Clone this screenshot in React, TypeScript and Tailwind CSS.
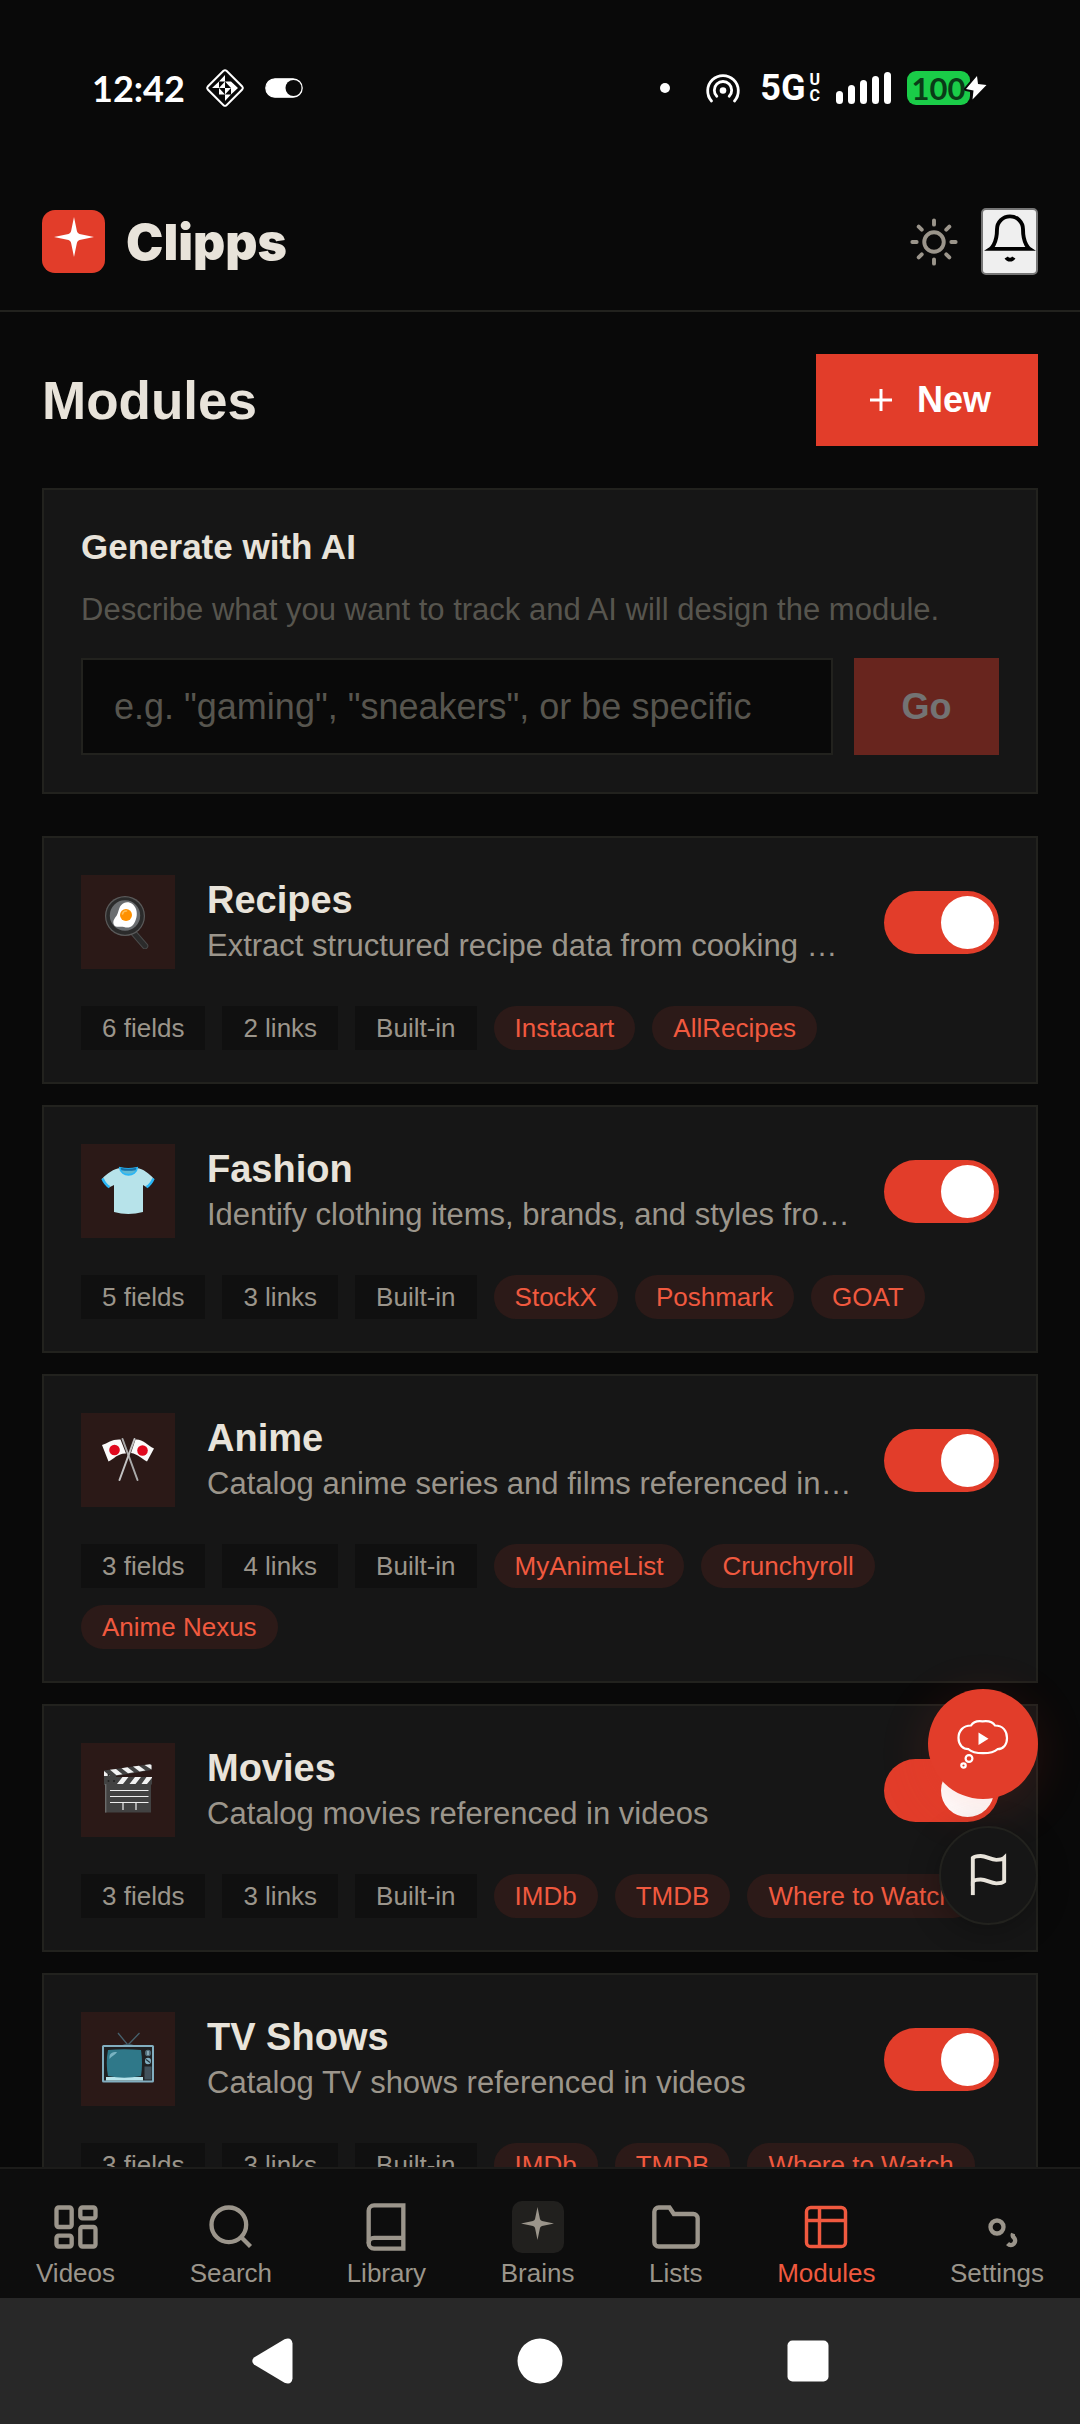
import { useState } from 'react';
import type { ReactNode } from 'react';

type Module = {
  name: string;
  description: string;
  icon: ReactNode;
  fields: number;
  links: number;
  tags: string[];
};

function PanIcon() {
  return (
    <svg viewBox="0 0 54 54" className="size-[54px]" aria-hidden="true">
      <path d="M31 36 L44 51" stroke="#4a4a4a" strokeWidth="6.500" strokeLinecap="round" />
      <path d="M31 36 L44 51" stroke="#2b2b2b" strokeWidth="4.600" strokeLinecap="round" />
      <circle cx="24" cy="21" r="20" fill="#5b5b5b" />
      <circle cx="24" cy="21" r="18.800" fill="#2b2b2b" />
      <circle cx="24" cy="20.500" r="15.200" fill="#6a6d70" />
      <path
        d="M23 8c5-2 10 1 12 6 2 6 0 12-3 16-3 3-6 3-9 2-4-1-8 1-10-2-2-4 1-7 3-10 2-4 2-10 7-12z"
        fill="#fff"
      />
      <circle cx="25" cy="20" r="6" fill="#ff9100" />
      <path d="M21.500 19c.5-2 2-3.200 4-3" stroke="#ffbd52" strokeWidth="1.600" fill="none" strokeLinecap="round" />
    </svg>
  );
}

function ShirtIcon() {
  return (
    <svg viewBox="0 0 54 54" className="size-[54px]" aria-hidden="true">
      <path
        d="M19 4 C13 5 6 9 1 15 L8 23.500 L13 21 V48 Q27 52 42 48 V21 L46 23.500 L53 15 C48 9 42 5 36 4 Q27 8 19 4z"
        fill="#b7e3ea"
      />
      <path d="M1.500 14.500 C3 18 5 21 8.500 23.200" stroke="#29b6f6" strokeWidth="2.600" fill="none" />
      <path d="M52.500 14.500 C51 18 49 21 45.500 23.200" stroke="#29b6f6" strokeWidth="2.600" fill="none" />
      <path d="M19 4 Q27 6 36 4 C35 13 20 13 19 4z" fill="#5fb8d2" stroke="#29b6f6" strokeWidth="2" />
      <path d="M19.500 3.800 Q27 5.500 35.500 3.800 L34.500 6.200 Q27 7.500 20.500 6.200z" fill="#1672a8" />
    </svg>
  );
}

function FlagsIcon() {
  return (
    <svg viewBox="0 0 54 54" className="size-[54px]" aria-hidden="true">
      <path d="M21.500 6 L36.500 47" stroke="#a9a9a9" strokeWidth="2" strokeLinecap="round" />
      <path d="M33.500 6 L18.500 47" stroke="#c2c2c2" strokeWidth="2" strokeLinecap="round" />
      <path d="M1 12 C7 10 11 6 19.500 6.500 L25 20.500 C17 20 13 26 7.500 28.500z" fill="#fafafa" />
      <path d="M53 15.500 C46 12 42 6 34.500 6.500 L30 20 C37 21 41 26 46 28.500z" fill="#fafafa" />
      <circle cx="13.500" cy="17" r="5.300" fill="#e0091f" />
      <circle cx="41.500" cy="17.500" r="5.300" fill="#e0091f" />
    </svg>
  );
}

function ClapperIcon() {
  return (
    <svg viewBox="0 0 54 54" className="size-[54px]" aria-hidden="true">
      <path d="M3 7.500 L50.500 1 V7 L15 13 V22 H3z" fill="#424242" />
      <path d="M9 6.800 L15 6 L21.500 11.200 L15.500 12.200z" fill="#f2f2f2" />
      <path d="M20.500 5.200 L26.500 4.300 L33 9.300 L27 10.300z" fill="#f2f2f2" />
      <path d="M32 3.600 L38 2.800 L44.500 7.600 L38.500 8.500z" fill="#f2f2f2" />
      <path d="M43.500 2 L49 1.200 L50.500 2.200 V6.600z" fill="#f2f2f2" />
      <path d="M3 8 L9 13 H3z" fill="#f2f2f2" />
      <rect x="13" y="14" width="38" height="7.500" fill="#424242" />
      <path d="M21.500 14 H27.500 L22 21 H16z M34 14 H40 L34.500 21 H28.500z M45.500 14 H51 V14.800 L46 21 H40.500z" fill="#f2f2f2" />
      <rect x="4" y="21" width="46" height="28.500" fill="#424242" />
      <path d="M4.700 21 V49.500" stroke="#6a6a6a" strokeWidth="1.400" />
      <path d="M9 27.500 H47.500 M9 33.500 H47.500 M9 39.500 H47.500 M22 39.500 V47 M35 39.500 V47" stroke="#eeeeee" strokeWidth="1.200" />
      <circle cx="7.500" cy="12" r="1" fill="#212121" />
      <circle cx="7.500" cy="18" r="1" fill="#212121" />
      <circle cx="13" cy="18" r="1" fill="#212121" />
    </svg>
  );
}

function TvIcon() {
  return (
    <svg viewBox="0 0 54 54" className="size-[54px]" aria-hidden="true">
      <path d="M17 1 L26 12 L27.500 12.500 L38.500 1" stroke="#46606c" strokeWidth="1.300" fill="none" />
      <path d="M20 13.500 Q27 10 34 13.500z" fill="#3d5660" />
      <rect x="1" y="13" width="52" height="37.500" rx="1.500" fill="#82aec0" />
      <rect x="3" y="15" width="48" height="33.500" fill="#1f2022" />
      <path d="M5 45 H42 V48.500 H5z" fill="#b7e3ea" />
      <path d="M7 18 Q23 16.500 40 18 Q42 31 40 44 Q23 47.500 7 44 Q4.500 31 7 18z" fill="#2f7889" />
      <path d="M8.500 27 C8 21.500 10.500 20 16 20 C14.500 23 11.500 23.500 8.500 27z" fill="#79b3c2" />
      <ellipse cx="47" cy="21" rx="3" ry="3.200" fill="#54707d" />
      <ellipse cx="47" cy="29" rx="3" ry="3.200" fill="#82aec0" />
      <path d="M45 27.500 L49 30.500" stroke="#24323a" strokeWidth="1.200" />
      <path d="M47 19 V23" stroke="#a9cad6" strokeWidth="1.200" />
      <rect x="43.500" y="34.500" width="7" height="13" fill="#42525c" />
    </svg>
  );
}

function Spark({ className }: { className: string }) {
  return (
    <svg viewBox="-20 -20 40 40" className={className} fill="currentColor" aria-hidden="true">
      <path d="M0-20 L3-5.500 Q3.600-3.600 5.500-3 L20 0 L5.500 3 Q3.600 3.600 3 5.500 L0 20 L-3 5.500 Q-3.600 3.600-5.500 3 L-20 0 L-5.500-3 Q-3.600-3.600-3-5.500z" />
    </svg>
  );
}

const modules: Module[] = [
  {
    name: 'Recipes',
    description: 'Extract structured recipe data from cooking videos',
    icon: <PanIcon />,
    fields: 6,
    links: 2,
    tags: ['Instacart', 'AllRecipes'],
  },
  {
    name: 'Fashion',
    description: 'Identify clothing items, brands, and styles from videos',
    icon: <ShirtIcon />,
    fields: 5,
    links: 3,
    tags: ['StockX', 'Poshmark', 'GOAT'],
  },
  {
    name: 'Anime',
    description: 'Catalog anime series and films referenced in videos',
    icon: <FlagsIcon />,
    fields: 3,
    links: 4,
    tags: ['MyAnimeList', 'Crunchyroll', 'Anime Nexus'],
  },
  {
    name: 'Movies',
    description: 'Catalog movies referenced in videos',
    icon: <ClapperIcon />,
    fields: 3,
    links: 3,
    tags: ['IMDb', 'TMDB', 'Where to Watch'],
  },
  {
    name: 'TV Shows',
    description: 'Catalog TV shows referenced in videos',
    icon: <TvIcon />,
    fields: 3,
    links: 3,
    tags: ['IMDb', 'TMDB', 'Where to Watch'],
  },
];

const navItems = [
  {
    label: 'Videos',
    icon: (
      <>
        <rect x="3" y="3" width="7" height="9" rx="1" />
        <rect x="14" y="3" width="7" height="5" rx="1" />
        <rect x="14" y="12" width="7" height="9" rx="1" />
        <rect x="3" y="16" width="7" height="5" rx="1" />
      </>
    ),
  },
  {
    label: 'Search',
    icon: (
      <>
        <circle cx="11" cy="11" r="8" />
        <path d="M21 21l-4.350-4.350" />
      </>
    ),
  },
  {
    label: 'Library',
    icon: (
      <>
        <path d="M4 19.500A2.500 2.500 0 0 1 6.500 17H20" />
        <path d="M6.500 2H20v20H6.500A2.500 2.500 0 0 1 4 19.500v-15A2.500 2.500 0 0 1 6.500 2z" />
      </>
    ),
  },
  { label: 'Brains', icon: null },
  {
    label: 'Lists',
    icon: <path d="M22 19a2 2 0 0 1-2 2H4a2 2 0 0 1-2-2V5a2 2 0 0 1 2-2h5l2 3h9a2 2 0 0 1 2 2z" />,
  },
  {
    label: 'Modules',
    icon: (
      <g strokeWidth="1.600">
        <rect x="3" y="3" width="18" height="18" rx="2" />
        <path d="M3 9h18M9 3v18" />
      </g>
    ),
  },
  {
    label: 'Settings',
    icon: (
      <>
        <circle cx="12" cy="12" r="3" />
        <path d="M19.400 15a1.650 1.650 0 0 0 .330 1.820l.060.060a2 2 0 0 1-2.830 2.830l-.060-.060" />
      </>
    ),
  },
];

function StatusBar() {
  return (
    <div className="flex h-[176px] shrink-0 items-center justify-between px-[92px] text-white">
      <div className="flex items-center gap-[21px]">
        <span className="font-['Lato'] text-[36px] leading-none font-bold">12:42</span>
        <svg viewBox="0 0 38 38" className="size-[38px]" fill="none" stroke="currentColor" aria-hidden="true">
          <path d="M17.500 1.800 L1.800 17.500 Q0.600 19 1.800 20.500 L17.500 36.200 Q19 37.400 20.500 36.200 L36.200 20.500 Q37.400 19 36.200 17.500 L20.500 1.800 Q19 0.600 17.500 1.800z" strokeWidth="2" />
          <path
            d="M19 6 V12.500 H13z M19 12.500 H25 V19z M25 12.500 L32 19 H25z M19 12.500 V19 H13z M13 12.500 V19 H6z M19 19 H25 L19 25.500z M13 19 L19 25.500 H13z M19 25.500 H25 L19 32z M25 19 H32 L25 25.500z"
            fill="currentColor"
            stroke="none"
          />
        </svg>
        <svg viewBox="0 0 38 20" className="h-5 w-[38px]" aria-hidden="true">
          <rect x="0.800" y="0.800" width="36.400" height="18.400" rx="9.200" fill="#fff" stroke="#fff" strokeWidth="1.200" />
          <circle cx="28.500" cy="10" r="8" fill="#090909" />
        </svg>
      </div>

      <div className="flex items-center">
        <span className="mr-[36px] size-[10px] rounded-full bg-white" />
        <svg viewBox="0 0 34 30" className="mr-5 h-[30px] w-[34px]" fill="none" stroke="currentColor" strokeWidth="2.800" strokeLinecap="round" aria-hidden="true">
          <path d="M5.500 28 A15.300 15.300 0 1 1 28.500 28" />
          <path d="M10.800 23.300 A8.700 8.700 0 1 1 23.200 23.300" />
          <circle cx="17" cy="17.500" r="3.300" fill="currentColor" stroke="none" />
        </svg>
        <span className="mr-1 font-['Roboto'] text-[36px] leading-none font-bold">5G</span>
        <span className="mr-4 flex flex-col font-['Roboto'] text-[16px] leading-4 font-bold">
          <span>U</span>
          <span>C</span>
        </span>
        <span className="mr-4 flex h-8 items-end gap-[5px]">
          <span className="h-[13px] w-[7px] rounded-full bg-white" />
          <span className="h-[19px] w-[7px] rounded-full bg-white" />
          <span className="h-[24px] w-[7px] rounded-full bg-white" />
          <span className="h-[28px] w-[7px] rounded-full bg-white" />
          <span className="h-[32px] w-[7px] rounded-full bg-white" />
        </span>
        <span className="flex items-center">
          <span className="flex h-[34px] w-[63px] items-center justify-center rounded-[9px] bg-[#1acc48] font-['Lato'] text-[31px] leading-none font-bold text-[#0a3a17]">
            100
          </span>
          <svg viewBox="0 0 24 28" className="-ml-[6px] h-7 w-6" aria-hidden="true">
            <path d="M13 2 L2 15 L9.500 16.500 L8.500 25.500 L22.500 11 L14 10z" fill="#fff" stroke="#090909" strokeWidth="4" strokeLinejoin="round" paintOrder="stroke" />
          </svg>
        </span>
      </div>
    </div>
  );
}

function Header() {
  return (
    <header className="flex shrink-0 items-center justify-between border-b-2 border-[#22221e] px-[42px] pt-8 pb-[35px]">
      <a href="#" className="flex items-center gap-[21px]">
        <span className="flex size-[63px] justify-center rounded-[13px] bg-[#e23d2a] pt-[7px] text-white">
          <Spark className="size-10" />
        </span>
        <span className="font-['Inter'] text-[50px] leading-none font-black">Clipps</span>
      </a>
      <div className="flex items-center gap-[21px]">
        <button type="button" aria-label="Toggle theme" className="text-[#9b958b]">
          <svg viewBox="0 0 24 24" className="size-[52px]" fill="none" stroke="currentColor" strokeWidth="1.800" strokeLinecap="round" aria-hidden="true">
            <circle cx="12" cy="12" r="4.500" />
            <path d="M12 2v2M12 20v2M4.930 4.930l1.410 1.410M17.660 17.660l1.410 1.410M2 12h2M20 12h2M6.340 17.660l-1.410 1.410M19.070 4.930l-1.410 1.410" />
          </svg>
        </button>
        <button
          type="button"
          aria-label="Notifications"
          className="flex h-[67px] w-[57px] justify-center rounded-[5px] border-2 border-[#767676] bg-[#efefef] pt-[2px] text-black"
        >
          <svg viewBox="0 0 24 24" className="size-[52px] shrink-0" fill="none" stroke="currentColor" strokeWidth="1.800" aria-hidden="true">
            <path d="M18 8A6 6 0 0 0 6 8c0 7-3 9-3 9h18s-3-2-3-9" />
            <path d="M13.730 21a2 2 0 0 1-3.460 0" />
          </svg>
        </button>
      </div>
    </header>
  );
}

function GenerateCard() {
  const [prompt, setPrompt] = useState('');

  return (
    <section className="border-2 border-[#22221e] bg-[#161616] p-[37px]">
      <h2 className="text-[35px] leading-[40px] font-bold">Generate with AI</h2>
      <label htmlFor="prompt" className="mt-[21px] block text-[31px] leading-[44px] text-[#57554e]">
        Describe what you want to track and AI will design the module.
      </label>
      <form className="mt-[26px] flex gap-[21px]">
        <input
          id="prompt"
          type="text"
          value={prompt}
          onChange={(e) => setPrompt(e.target.value)}
          placeholder={'e.g. "gaming", "sneakers", or be specific'}
          className="h-[97px] min-w-0 flex-1 border-2 border-[#22221e] bg-[#090909] px-[31px] text-[36px] outline-none placeholder:text-[#57554e]"
        />
        <button
          type="submit"
          disabled={!prompt}
          className="w-[145px] bg-[#e23d2a] text-[36px] font-bold text-white disabled:opacity-40"
        >
          Go
        </button>
      </form>
    </section>
  );
}

function ModuleCard({ module }: { module: Module }) {
  const facts = [`${module.fields} fields`, `${module.links} links`, 'Built-in'];

  return (
    <li className="border-2 border-[#22221e] bg-[#161616] px-[37px] pt-[37px] pb-8">
      <div className="flex items-center gap-8">
        <div className="flex size-[94px] shrink-0 items-center justify-center bg-[#2b1917]">{module.icon}</div>
        <div className="min-w-0 flex-1">
          <h3 className="text-[38px] leading-[48px] font-bold">{module.name}</h3>
          <p className="truncate text-[31px] leading-[44px] text-[#9b958b]">{module.description}</p>
        </div>
        <input
          type="checkbox"
          defaultChecked
          aria-label={`Enable ${module.name}`}
          className="h-[63px] w-[115px] shrink-0 appearance-none rounded-full bg-[#33322e] p-[5px] before:block before:size-[53px] before:rounded-full before:bg-white checked:bg-[#e23d2a] checked:before:translate-x-[52px]"
        />
      </div>
      <div className="mt-[37px] flex flex-wrap gap-[17px] text-[26px] leading-[44px]">
        {facts.map((fact) => (
          <span key={fact} className="bg-[#101010] px-[21px] text-[#9b958b]">
            {fact}
          </span>
        ))}
        {module.tags.map((tag) => (
          <span key={tag} className="rounded-full bg-[#2c1a18] px-[21px] text-[#f0593f]">
            {tag}
          </span>
        ))}
      </div>
    </li>
  );
}

function FloatingActions() {
  return (
    <div className="absolute right-[42px] bottom-[242px] flex flex-col items-end gap-[27px]">
      <button
        type="button"
        aria-label="Ask about videos"
        className="flex size-[110px] items-center justify-center rounded-full bg-[#e23d2a] text-white shadow-[0_10px_52px_rgba(226,61,42,0.15)]"
      >
        <svg viewBox="0 0 52 52" className="size-[52px]" fill="none" stroke="currentColor" strokeWidth="2.200" aria-hidden="true">
          <path d="M14 7.500 C17 2.500 22 2.800 25.500 3.300 C29 2.800 35 2.500 38 7.500 C46 7.500 50 13 50 20 C50 27 46 31 40.500 31.200 C35 36.500 17 36.500 11.500 31.200 C6 31 1.500 27 1.500 20 C1.500 13 6 7.500 14 7.500z" />
          <circle cx="12" cy="40.500" r="3.400" />
          <circle cx="6.500" cy="47.500" r="2.200" />
          <path d="M21.500 14.500 L31.500 20.800 L21.500 27z" fill="currentColor" stroke="none" />
        </svg>
      </button>
      <button
        type="button"
        aria-label="Report an issue"
        className="flex size-[99px] items-center justify-center rounded-full border-2 border-[#22221e] bg-[#161616] shadow-[0_5px_32px_rgba(0,0,0,0.3)]"
      >
        <svg viewBox="0 0 24 24" className="size-[47px]" fill="none" stroke="currentColor" strokeWidth="2" aria-hidden="true">
          <path d="M4 15s1-1 4-1 5 2 8 2 4-1 4-1V3s-1 1-4 1-5-2-8-2-4 1-4 1z" />
          <path d="M4 22v-7" />
        </svg>
      </button>
    </div>
  );
}

function BottomNav() {
  return (
    <nav className="flex shrink-0 justify-between border-t-2 border-[#1c1c1a] bg-[#0d0d0d] px-9 pt-8 pb-[9px]">
      {navItems.map((item) => (
        <a
          key={item.label}
          href={`#${item.label.toLowerCase()}`}
          className={`flex flex-col items-center gap-1 ${item.label === 'Modules' ? 'text-[#f0593f]' : 'text-[#9b958b]'}`}
        >
          {item.icon ? (
            <svg viewBox="0 0 24 24" className="size-[52px]" fill="none" stroke="currentColor" strokeWidth="2" aria-hidden="true">
              {item.icon}
            </svg>
          ) : (
            <span className="flex size-[52px] justify-center rounded-[10px] bg-[#21201e] pt-[6px]">
              <Spark className="size-[33px]" />
            </span>
          )}
          <span className="text-[26px] leading-8">{item.label}</span>
        </a>
      ))}
    </nav>
  );
}

function SystemBar() {
  return (
    <div className="flex h-[126px] shrink-0 items-center justify-center gap-[216px] bg-[#282828] text-white">
      <button type="button" aria-label="Back">
        <svg viewBox="0 0 52 52" className="size-[52px]" fill="currentColor" aria-hidden="true">
          <path d="M8 22.500 L38.500 4.300 Q45.500 1.500 46.500 8.500 V43.500 Q45.500 50.500 38.500 47.700 L8 29.500 Q4.500 26 8 22.500z" />
        </svg>
      </button>
      <button type="button" aria-label="Home">
        <svg viewBox="0 0 52 52" className="size-[52px]" fill="currentColor" aria-hidden="true">
          <circle cx="26" cy="26" r="22.500" />
        </svg>
      </button>
      <button type="button" aria-label="Recent apps">
        <svg viewBox="0 0 52 52" className="size-[52px]" fill="currentColor" aria-hidden="true">
          <rect x="5.500" y="5.500" width="41" height="41" rx="5" />
        </svg>
      </button>
    </div>
  );
}

export default function App() {
  return (
    <div className="flex h-screen flex-col overflow-hidden bg-[#090909] font-['Liberation_Sans',sans-serif] text-[#e8e3da]">
      <StatusBar />
      <Header />

      <div className="relative flex min-h-0 flex-1 flex-col">
        <main className="min-h-0 flex-1 overflow-y-auto px-[42px] py-[42px] [scrollbar-width:none]">
          <div className="mb-[42px] flex items-center justify-between">
            <h1 className="text-[53px] leading-none font-bold">Modules</h1>
            <button
              type="button"
              className="flex h-[92px] items-center gap-5 bg-[#e23d2a] px-[47px] text-[36px] font-bold text-white"
            >
              <svg viewBox="0 0 34 34" className="size-[34px]" stroke="currentColor" strokeWidth="3" aria-hidden="true">
                <path d="M18 6v22M7 17h22" />
              </svg>
              New
            </button>
          </div>

          <GenerateCard />

          <ul className="mt-[42px] flex flex-col gap-[21px]">
            {modules.map((module) => (
              <ModuleCard key={module.name} module={module} />
            ))}
          </ul>
        </main>
        <FloatingActions />
      </div>

      <BottomNav />
      <SystemBar />
    </div>
  );
}
